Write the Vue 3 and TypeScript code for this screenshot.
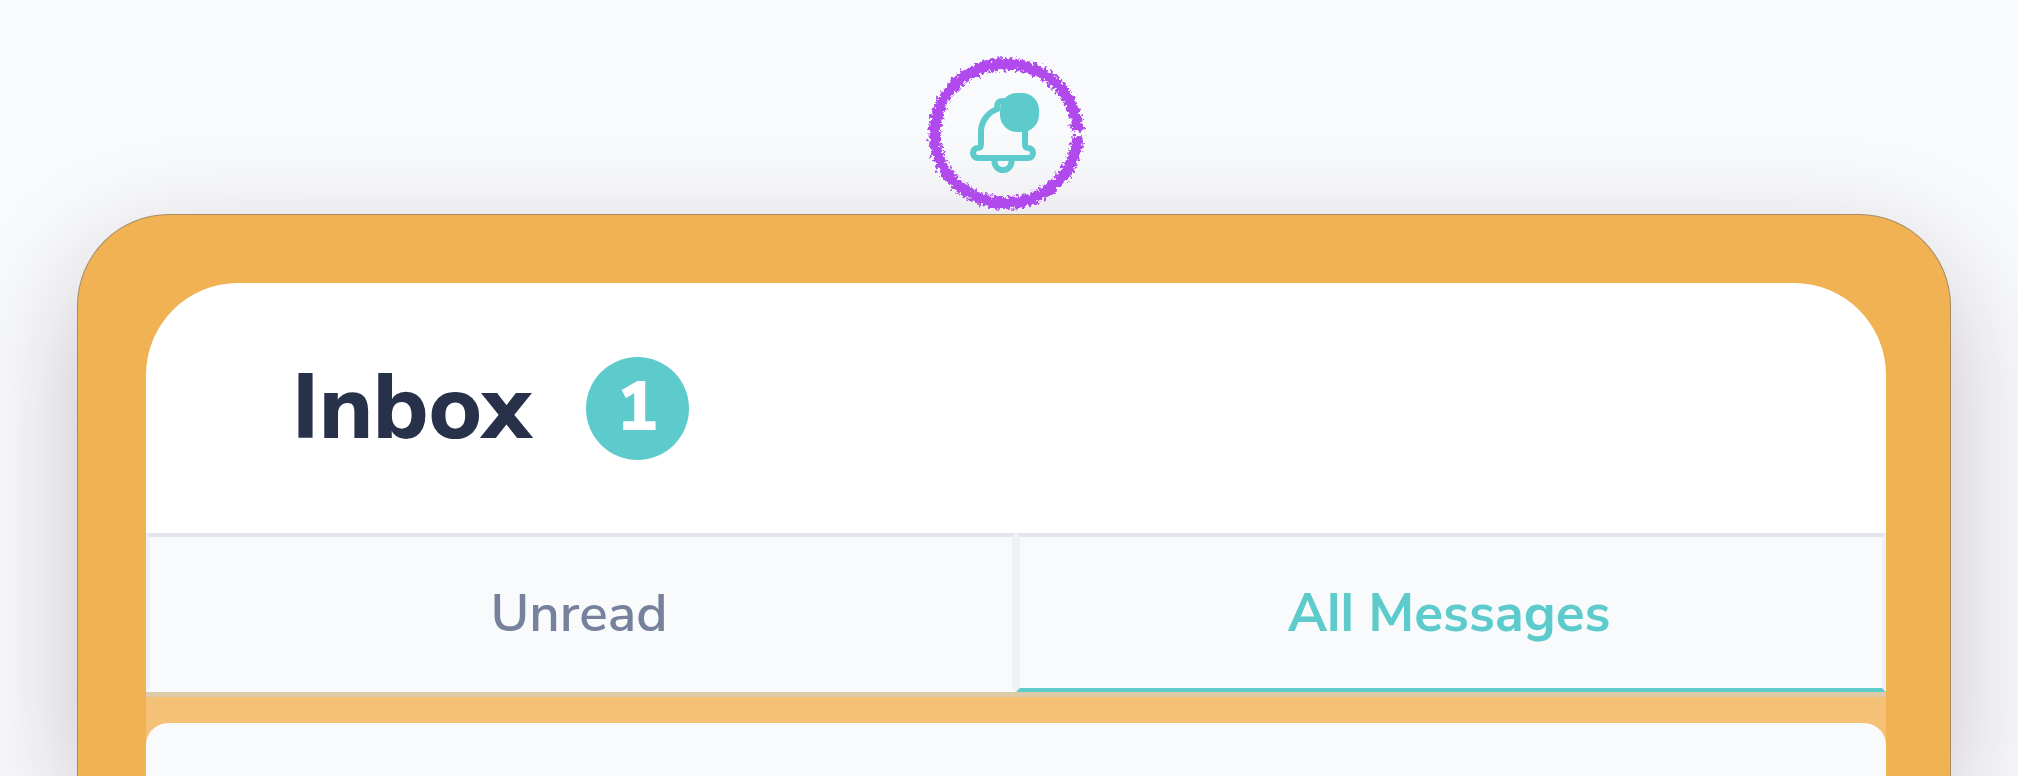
<script setup lang="ts">
import { computed, ref } from 'vue'

type TabId = 'unread' | 'all'

interface Tab {
  id: TabId
  label: string
}

const tabs: Tab[] = [
  { id: 'unread', label: 'Unread' },
  { id: 'all', label: 'All Messages' },
]

const active = ref<TabId>('all')
const unreadCount = ref(1)
const bellLabel = computed(() => `Notifications, ${unreadCount.value} unread`)
</script>

<template>
  <main class="page">
    <div class="toolbar">
      <button class="bell" type="button" :aria-label="bellLabel">
        <svg viewBox="14 14 164 160" width="164" height="160" fill="none" aria-hidden="true">
          <defs>
            <filter id="crayon" x="0" y="0" width="190" height="180" filterUnits="userSpaceOnUse" color-interpolation-filters="sRGB">
              <feTurbulence type="fractalNoise" baseFrequency="0.32" numOctaves="2" seed="7" result="noise" />
              <feDisplacementMap in="SourceGraphic" in2="noise" scale="10" xChannelSelector="R" yChannelSelector="G" />
            </filter>
          </defs>
          <g filter="url(#crayon)" stroke="#b04aec">
            <path d="M168 91A72 70 0 1 0 168 96" stroke-width="11" />
            <path d="M163 90A67 65 0 1 0 163 97" stroke-width="4" stroke-dasharray="2 2 3 3 1 2 4 2" />
          </g>
          <g stroke="#5dcbcc" stroke-width="6" stroke-linecap="round" stroke-linejoin="round">
            <path d="M87 69C77 73 71 82 71 92V104C71 107 70 108 68 108C65 108 63 110 63 113C63 116 65 118 68 118H118C121 118 123 116 123 113C123 110 121 108 118 108C116 108 115 107 115 104V88" />
            <path d="M87 69V67C87 63 89 61 93 61" />
            <path d="M84.500 120V121.500A8.500 8.500 0 0 0 101.500 121.500V120" />
          </g>
          <rect x="90" y="53" width="39" height="39" rx="17" fill="#5dcbcc" />
        </svg>
      </button>
    </div>

    <section class="frame">
      <div class="inbox">
        <header class="heading">
          <h1>Inbox</h1>
          <span class="count">{{ unreadCount }}</span>
        </header>
        <nav class="tabs" role="tablist">
          <button
            v-for="tab in tabs"
            :key="tab.id"
            type="button"
            role="tab"
            class="tab"
            :class="{ active: active === tab.id }"
            :aria-selected="active === tab.id"
            @click="active = tab.id"
          >
            {{ tab.label }}
          </button>
        </nav>
        <div class="list">
          <div class="message"></div>
        </div>
      </div>
    </section>
  </main>
</template>

<style>
body {
  margin: 0;
  background: #f9fafc;
}
</style>

<style scoped>
.page {
  box-sizing: border-box;
  display: flex;
  flex-direction: column;
  min-height: 100vh;
  padding: 54px 67px 0 77px;
  overflow: hidden;
  background: #f9fafc;
  font-family: "Nunito Sans", Nunito, Lato, "Open Sans", sans-serif;
  font-feature-settings: "ss02";
}

.toolbar {
  z-index: 1;
  display: flex;
  justify-content: center;
  padding-right: 16px;
}

.bell {
  display: block;
  padding: 0;
  border: 0;
  background: none;
  cursor: pointer;
}

.bell svg {
  display: block;
}

.frame {
  flex: 1;
  display: flex;
  box-sizing: border-box;
  padding: 68px 64px 0 68px;
  border: 1px solid #a58c66;
  border-bottom: 0;
  border-radius: 92px 92px 0 0;
  background: #f0b253;
  box-shadow: 0 40px 120px rgba(40, 10, 25, 0.23);
}

.inbox {
  flex: 1;
  display: flex;
  flex-direction: column;
  border-radius: 92px 92px 0 0;
  overflow: hidden;
}

.heading {
  box-sizing: border-box;
  display: flex;
  align-items: center;
  gap: 54px;
  min-height: 250px;
  padding: 0 146px;
  background: #fff;
}

h1 {
  margin: 0;
  font-size: 91px;
  line-height: 112px;
  font-weight: 800;
  color: #27314a;
}

.count {
  display: flex;
  align-items: center;
  justify-content: center;
  box-sizing: border-box;
  width: 103px;
  height: 103px;
  padding-bottom: 2px;
  border-radius: 50%;
  background: #5dcbcc;
  color: #fff;
  font-size: 70px;
  line-height: 96px;
  font-weight: 800;
}

.tabs {
  display: grid;
  grid-template-columns: 1fr 1fr;
}

.tab {
  height: 159px;
  padding: 2px 4px 0 0;
  border: 4px solid #f0f1f5;
  border-top-color: #e2e5ed;
  border-bottom-color: #f9fafc;
  background: #f9fafc;
  color: #76819b;
  font-family: inherit;
  font-feature-settings: inherit;
  font-size: 53px;
  font-weight: 600;
  cursor: pointer;
}

.tab.active {
  border-bottom-color: #5dcbcc;
  color: #5dcbcc;
  font-weight: 700;
}

.list {
  flex: 1;
  display: flex;
  flex-direction: column;
  padding-top: 26px;
  border-top: 5px solid #dfcaa7;
  background: #f4c176;
}

.message {
  flex: 1;
  border-radius: 22px 22px 0 0;
  background: #f9fafc;
}
</style>
